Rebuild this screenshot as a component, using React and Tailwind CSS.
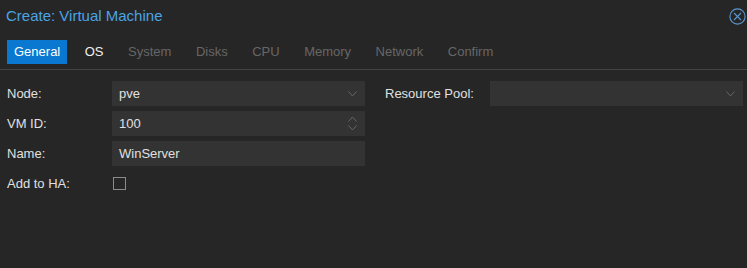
import React from "react";

const tabs = ["General", "OS", "System", "Disks", "CPU", "Memory", "Network", "Confirm"];

function Chevron({ up = false }) {
  return (
    <svg width="9" height="6" viewBox="0 0 9 6" className="text-[#666]" aria-hidden="true">
      <path
        d={up ? "M0.5 5.5 L4.5 1 L8.5 5.5" : "M0.5 0.5 L4.5 5 L8.5 0.5"}
        fill="none"
        stroke="currentColor"
        strokeWidth="1"
      />
    </svg>
  );
}

function Field({ value, kind, className = "" }) {
  return (
    <div className={`flex h-[25px] items-center bg-[#333333] pl-[7px] pr-[8px] ${className}`}>
      <span className="flex-1 text-[13px] text-[#e0e0e0]">{value}</span>
      {kind === "select" && <Chevron />}
      {kind === "spin" && (
        <div className="flex flex-col gap-[3px]">
          <Chevron up />
          <Chevron />
        </div>
      )}
    </div>
  );
}

function Row({ label, children }) {
  return (
    <div className="flex h-[25px] items-center">
      <span className="w-[112px] pl-[7px] text-[13px] text-[#e0e0e0]">{label}</span>
      {children}
    </div>
  );
}

export default function App() {
  return (
    <div
      className="h-[268px] w-[747px] overflow-hidden bg-[#262626]"
      style={{ fontFamily: '"Liberation Sans", Arial, sans-serif' }}
    >
      <div className="flex h-[33px] items-center justify-between pl-[6px] pr-[1px]">
        <h1 className="text-[15px] text-[#4ba3e3]">Create: Virtual Machine</h1>
        <svg width="17" height="17" viewBox="0 0 17 17" className="text-[#5a97cf]" aria-hidden="true">
          <circle cx="8.5" cy="8.5" r="7.6" fill="none" stroke="currentColor" strokeWidth="1.1" />
          <path d="M5 5 L12 12 M12 5 L5 12" stroke="currentColor" strokeWidth="1.1" />
        </svg>
      </div>

      <div className="flex h-[37px] items-start border-b border-[#444] pl-[7px] pt-[7px]">
        {tabs.map((t, i) => (
          <span
            key={t}
            className={`mr-[10.5px] flex h-[24px] items-center px-[7px] text-[13px] ${
              i === 0 ? "bg-[#0a78d1] text-white" : i === 1 ? "text-[#f0f0f0]" : "text-[#666666]"
            }`}
          >
            {t}
          </span>
        ))}
      </div>

      <div className="flex pt-[11px]">
        <div className="flex w-[365px] flex-col gap-[5px]">
          <Row label="Node:">
            <Field value="pve" kind="select" className="w-[253px]" />
          </Row>
          <Row label="VM ID:">
            <Field value="100" kind="spin" className="w-[253px]" />
          </Row>
          <Row label="Name:">
            <Field value="WinServer" className="w-[253px]" />
          </Row>
          <Row label="Add to HA:">
            <span className="ml-[1px] h-[13px] w-[13px] border border-[#8a8a8a]" />
          </Row>
        </div>
        <div className="ml-[20px] flex h-[25px] items-center">
          <span className="w-[105px] text-[13px] text-[#e0e0e0]">Resource Pool:</span>
          <Field value="" kind="select" className="w-[253px]" />
        </div>
      </div>
    </div>
  );
}
